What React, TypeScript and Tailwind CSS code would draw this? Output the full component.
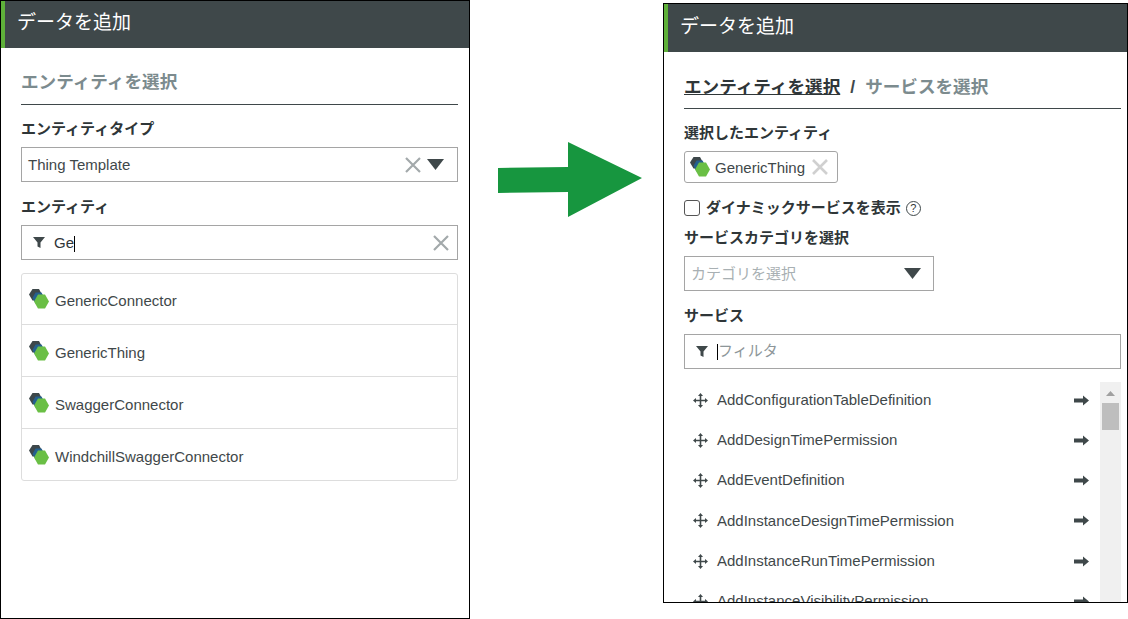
import React from 'react';

const HexIcon = () => (
  <svg width="20" height="20" viewBox="0 0 20 20" className="shrink-0">
    <polygon points="0,5.5 3.5,0 10,0 13,5.5 10,11.5 3.5,11.5" fill="#3d474a" />
    <polygon points="3.5,9 6.5,3.5 12.5,3.5 15.5,9 12.5,14.5 6.5,14.5" fill="#24608f" />
    <polygon points="5,12.5 9,5.5 16,5.5 20,12.5 16,19.5 9,19.5" fill="#6abf45" />
  </svg>
);

const Cross = ({ size = 18, color = '#a3a9ab', weight = 2.2 }: { size?: number; color?: string; weight?: number }) => (
  <svg width={size} height={size} viewBox="0 0 18 18" className="shrink-0">
    <path d="M2 2 L16 16 M16 2 L2 16" stroke={color} strokeWidth={weight} fill="none" />
  </svg>
);

const Caret = () => (
  <svg width="17" height="11" viewBox="0 0 17 11" className="shrink-0">
    <polygon points="0,0 17,0 8.5,11" fill="#3f484a" />
  </svg>
);

const Funnel = () => (
  <svg width="12" height="11" viewBox="0 0 12 11" className="shrink-0">
    <polygon points="0,0 12,0 7.5,5.5 7.5,11 4.5,9.5 4.5,5.5" fill="#3f484a" />
  </svg>
);

const MoveIcon = () => (
  <svg width="15" height="15" viewBox="0 0 15 15" className="shrink-0">
    <path d="M7.5 2 V13 M2 7.5 H13" stroke="#3f484a" strokeWidth="1.6" fill="none" />
    <polygon points="7.5,0 10,3 5,3" fill="#3f484a" />
    <polygon points="7.5,15 10,12 5,12" fill="#3f484a" />
    <polygon points="0,7.5 3,5 3,10" fill="#3f484a" />
    <polygon points="15,7.5 12,5 12,10" fill="#3f484a" />
  </svg>
);

const RightArrow = () => (
  <svg width="15" height="11" viewBox="0 0 15 11" className="shrink-0">
    <polygon points="0,3.5 9,3.5 9,0.5 15,5.5 9,10.5 9,7.5 0,7.5" fill="#3f484a" />
  </svg>
);

const Header = ({ tall }: { tall?: boolean }) => (
  <div
    className={`shrink-0 bg-[#3f484a] border-l-[4px] border-[#5fb13a] pl-[12px] pb-[2px] flex items-center text-[19px] text-white ${tall ? 'h-[48px]' : 'h-[47px]'}`}
  >
    データを追加
  </div>
);

const entities = ['GenericConnector', 'GenericThing', 'SwaggerConnector', 'WindchillSwaggerConnector'];

const services = [
  'AddConfigurationTableDefinition',
  'AddDesignTimePermission',
  'AddEventDefinition',
  'AddInstanceDesignTimePermission',
  'AddInstanceRunTimePermission',
  'AddInstanceVisibilityPermission',
];

export default function App() {
  return (
    <div
      className="w-[1128px] h-[619px] bg-white flex items-start overflow-hidden text-[15px] text-[#3f484a]"
      style={{ fontFamily: '"Liberation Sans", "Noto Sans CJK JP", sans-serif' }}
    >
      {/* Left panel */}
      <div className="w-[470px] h-[619px] shrink-0 border border-black flex flex-col">
        <Header />
        <div className="pl-[20px] pr-[11px] flex flex-col">
          <div className="h-[57px] border-b border-[#3f484a] pt-[22px] text-[17.6px] leading-[24px] font-bold text-[#7c8b8e]">
            エンティティを選択
          </div>
          <div className="mt-[12px] h-[23px] leading-[24px] font-bold text-[#2f3638]">エンティティタイプ</div>
          <div className="mt-[7px] h-[35px] border border-[#a5a5a5] pl-[6px] pr-[13px] flex items-center">
            <span className="flex-1 pt-[2px]">Thing Template</span>
            <Cross />
            <span className="ml-[5px] flex"><Caret /></span>
          </div>
          <div className="mt-[13px] h-[23px] leading-[24px] font-bold text-[#2f3638]">エンティティ</div>
          <div className="mt-[7px] h-[35px] border border-[#a5a5a5] pl-[11px] pr-[7px] flex items-center">
            <Funnel />
            <span className="ml-[9px] flex-1 flex items-center text-[#2f3638] pt-[2px]">Ge<span className="w-px h-[16px] bg-black" /></span>
            <Cross />
          </div>
          <div className="mt-[13px] border border-[#dddddd] rounded-[3px] flex flex-col">
            {entities.map((name, i) => (
              <div
                key={name}
                className={`pl-[7px] flex items-start gap-[6px] ${i > 0 ? 'h-[52px] pt-[16px] border-t border-[#dddddd]' : 'h-[50px] pt-[15px]'}`}
              >
                <HexIcon />
                <span className="mt-[2px] leading-[20px]">{name}</span>
              </div>
            ))}
          </div>
        </div>
      </div>

      {/* Arrow between the panels */}
      <svg width="144" height="76" viewBox="0 0 144 76" className="shrink-0 ml-[28px] mt-[142px]">
        <polygon points="0,26 70,25 70,0 144,36 70,75 70,50 0,51" fill="#17963f" />
      </svg>

      {/* Right panel */}
      <div className="w-[465px] h-[600px] shrink-0 ml-[21px] mt-[3px] border border-black flex flex-col overflow-hidden">
        <Header tall />
        <div className="pl-[20px] pr-[6px] flex flex-col">
          <div className="h-[57px] border-b border-[#3f484a] pt-[23px] text-[17.6px] leading-[24px] font-bold text-[#7c8b8e] flex">
            <span className="text-[#2f3638] underline">エンティティを選択</span>
            <span className="mx-[10px] text-[#3f484a]">/</span>
            <span>サービスを選択</span>
          </div>
          <div className="mt-[12px] h-[23px] leading-[24px] font-bold text-[#2f3638]">選択したエンティティ</div>
          <div className="mt-[7px] h-[32px] w-[154px] border border-[#a5a5a5] rounded-[3px] pl-[5px] flex items-center gap-[5px]">
            <HexIcon />
            <span className="pt-[2px]">GenericThing</span>
            <span className="ml-[1px] flex"><Cross color="#d0d0d0" weight={2.6} /></span>
          </div>
          <div className="mt-[13px] h-[24px] flex items-center font-bold text-[#2f3638]">
            <span className="w-[16px] h-[16px] border border-[#555] rounded-[3px] bg-white" />
            <span className="ml-[6px]">ダイナミックサービスを表示</span>
            <span className="ml-[5px] w-[15px] h-[15px] rounded-full border border-[#3f484a] text-[11px] leading-[13px] text-center font-normal">?</span>
          </div>
          <div className="mt-[6px] h-[23px] leading-[24px] font-bold text-[#2f3638]">サービスカテゴリを選択</div>
          <div className="mt-[7px] h-[35px] w-[250px] border border-[#a5a5a5] pl-[6px] pr-[12px] flex items-center">
            <span className="flex-1 text-[#a8b0b3] pt-[2px]">カテゴリを選択</span>
            <Caret />
          </div>
          <div className="mt-[13px] h-[23px] leading-[24px] font-bold text-[#2f3638]">サービス</div>
          <div className="mt-[7px] h-[35px] border border-[#a5a5a5] pl-[11px] flex items-center">
            <Funnel />
            <span className="w-px h-[16px] bg-black ml-[9px]" />
            <span className="text-[#8d9699]">フィルタ</span>
          </div>
          <div className="mt-[13px] flex">
            <div className="flex-1 flex flex-col -mt-[2px]">
              {services.map((name) => (
                <div key={name} className="h-[40.25px] shrink-0 pl-[9px] pr-[11px] flex items-center">
                  <MoveIcon />
                  <span className="ml-[9px] flex-1">{name}</span>
                  <RightArrow />
                </div>
              ))}
            </div>
            <div className="w-[21px] h-[230px] bg-[#f0f0f0] flex flex-col items-center pt-[9px] shrink-0">
              <svg width="9" height="5" viewBox="0 0 9 5" className="shrink-0"><polygon points="4.5,0 9,5 0,5" fill="#a0a0a0" /></svg>
              <div className="mt-[7px] w-[17px] h-[27px] bg-[#bebebe]" />
            </div>
          </div>
        </div>
      </div>
    </div>
  );
}
